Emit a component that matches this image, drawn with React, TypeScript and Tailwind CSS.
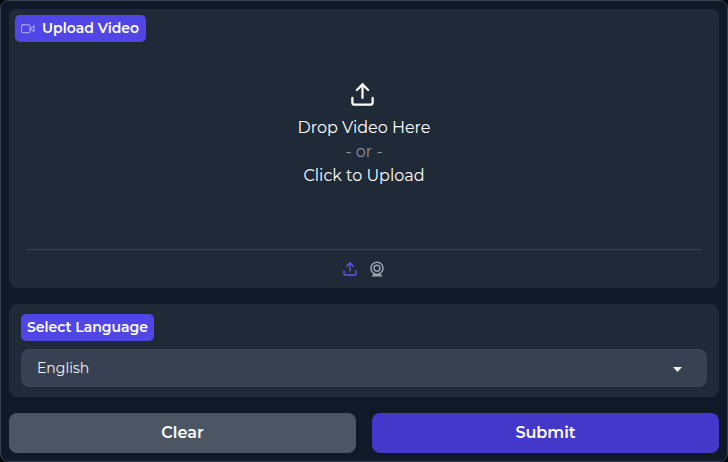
import React from "react";

function UploadIcon({ className }: { className: string }) {
  return (
    <svg className={className} viewBox="0 0 24 24" fill="none" stroke="currentColor" strokeWidth="2" strokeLinecap="round" strokeLinejoin="round">
      <path d="M21 15v4a2 2 0 0 1-2 2H5a2 2 0 0 1-2-2v-4" />
      <polyline points="17 8 12 3 7 8" />
      <line x1="12" y1="3" x2="12" y2="15" />
    </svg>
  );
}

function VideoIcon() {
  return (
    <svg className="h-[13.500px] w-[13.500px] shrink-0 text-[#ccc9fa]" viewBox="0 0 24 24" fill="none" stroke="currentColor" strokeWidth="1.5" strokeLinecap="round" strokeLinejoin="round">
      <polygon points="23 7 16 12 23 17 23 7" />
      <rect x="1" y="5" width="15" height="14" rx="2" />
    </svg>
  );
}

function WebcamIcon() {
  return (
    <svg className="h-[18px] w-[18px] text-[#9ca3af]" viewBox="0 0 24 24" fill="currentColor">
      <path d="M12 2c-4.963 0-9 4.038-9 9c0 3.328 1.82 6.232 4.513 7.79l-2.067 1.378A1 1 0 0 0 6 22h12a1 1 0 0 0 .555-1.832l-2.067-1.378C19.18 17.232 21 14.328 21 11c0-4.962-4.037-9-9-9zm0 16c-3.859 0-7-3.141-7-7c0-3.86 3.141-7 7-7s7 3.14 7 7c0 3.859-3.141 7-7 7z" />
      <path d="M12 6c-2.757 0-5 2.243-5 5s2.243 5 5 5s5-2.243 5-5s-2.243-5-5-5zm0 8c-1.654 0-3-1.346-3-3s1.346-3 3-3s3 1.346 3 3s-1.346 3-3 3z" />
    </svg>
  );
}

export default function App() {
  return (
    <div className="h-[462px] w-[728px] bg-[#05070c] font-['Montserrat','Inter',sans-serif]">
      <main className="flex h-full flex-col gap-4 rounded-lg border border-[#374151] bg-[#111827] p-2 text-white">
        <section className="flex h-[279px] shrink-0 flex-col rounded-lg bg-[#1f2937]">
          <div className="ml-1.5 mt-1.5 flex h-[27px] w-[130.500px] shrink-0 items-center gap-[7.500px] rounded-[5px] bg-[#4f46e5] pl-[6px]">
            <VideoIcon />
            <span className="whitespace-nowrap pb-0.5 text-[14px] font-semibold leading-5">Upload Video</span>
          </div>
          <div className="mt-[39px] flex h-[168px] flex-col items-center pr-[3px]">
            <UploadIcon className="h-[27px] w-[27px]" />
            <div className="mt-2 pl-[3px] text-center text-[16px] font-[450] leading-6">
              <div>Drop Video Here</div>
              <div className="text-[#8b93a1]">- or -</div>
              <div>Click to Upload</div>
            </div>
          </div>
          <div className="mx-[18px] flex h-[39px] items-center justify-center gap-[10px] border-t border-[#374151]">
            <UploadIcon className="h-4 w-4 text-[#635bf0]" />
            <WebcamIcon />
          </div>
        </section>

        <section className="flex h-[93px] shrink-0 flex-col gap-2 rounded-lg bg-[#1f2937] px-3 pt-[10px]">
          <div className="flex h-[27px] w-[133px] items-center justify-center rounded-[5px] bg-[#4f46e5]">
            <span className="whitespace-nowrap pb-0.5 text-[14px] font-semibold leading-5">Select Language</span>
          </div>
          <div className="flex h-[38px] items-center justify-between rounded-lg bg-[#374151] pl-4 pr-[25px] text-[14px] text-[#f3f4f6]">
            <span>English</span>
            <svg className="mt-[3px] h-[5px] w-[9px]" viewBox="0 0 9 5" fill="currentColor">
              <path d="M0 0h9L4.500 5z" />
            </svg>
          </div>
        </section>

        <div className="grid h-10 shrink-0 grid-cols-2 gap-4 text-[16px] font-semibold">
          <button className="rounded-lg bg-[#4b5563]">Clear</button>
          <button className="rounded-lg bg-[#4338ca]">Submit</button>
        </div>
      </main>
    </div>
  );
}
